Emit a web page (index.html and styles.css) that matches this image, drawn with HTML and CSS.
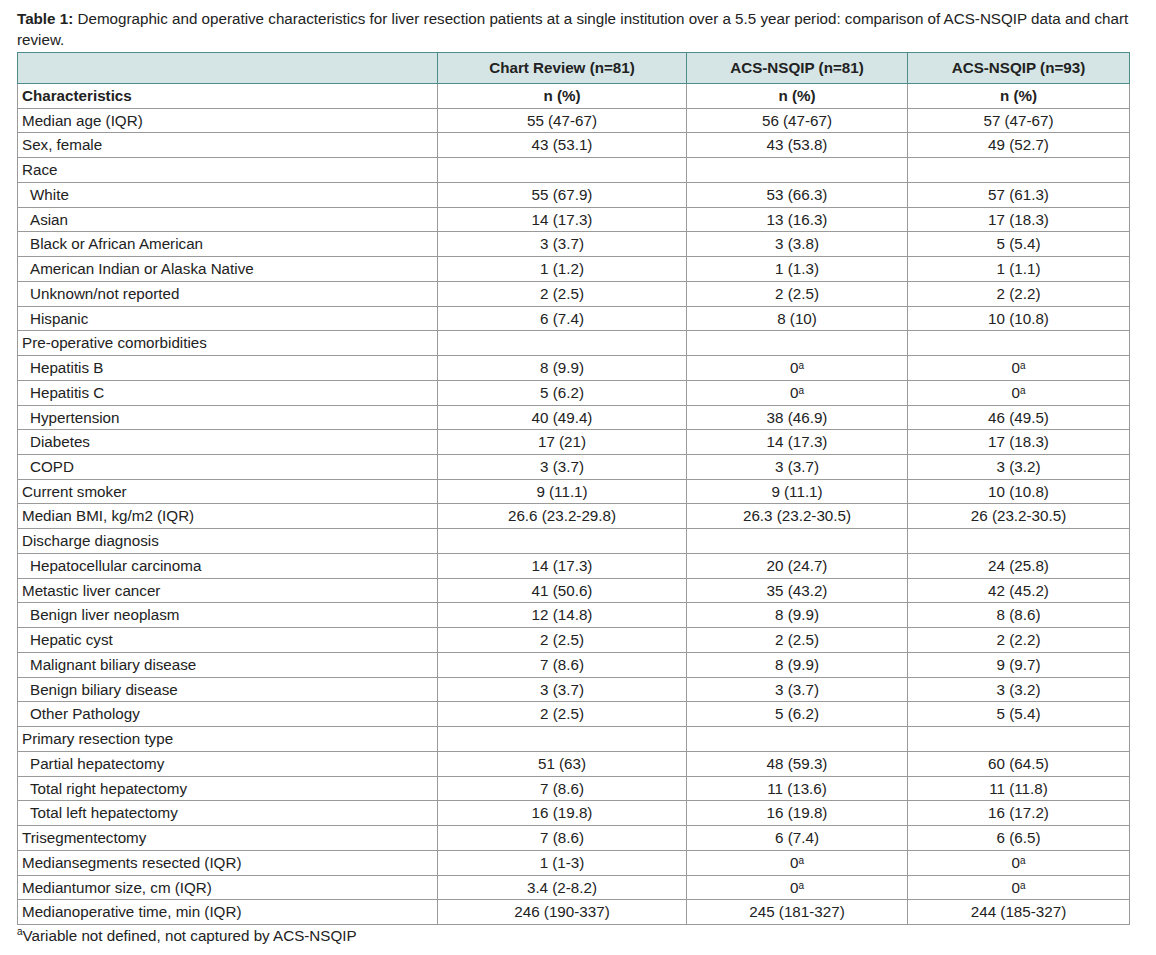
FILE: index.html
```html
<!DOCTYPE html>
<html>
<head>
<meta charset="utf-8">
<link rel="stylesheet" href="styles.css">
</head>
<body>
<div class="wrap">
<p class="caption"><b>Table 1:</b> Demographic and operative characteristics for liver resection patients at a single institution over a 5.5 year period: comparison of ACS-NSQIP data and chart review.</p>
<table class="data">
<colgroup><col class="c1"><col class="c2"><col class="c3"><col class="c4"></colgroup>
<thead>
<tr class="head"><th></th><th>Chart Review (n=81)</th><th>ACS-NSQIP (n=81)</th><th>ACS-NSQIP (n=93)</th></tr>
</thead>
<tbody>
<tr class="sub"><td>Characteristics</td><td>n (%)</td><td>n (%)</td><td>n (%)</td></tr>
<tr><td>Median age (IQR)</td><td>55 (47-67)</td><td>56 (47-67)</td><td>57 (47-67)</td></tr>
<tr><td>Sex, female</td><td>43 (53.1)</td><td>43 (53.8)</td><td>49 (52.7)</td></tr>
<tr><td>Race</td><td></td><td></td><td></td></tr>
<tr><td class="ind">White</td><td>55 (67.9)</td><td>53 (66.3)</td><td>57 (61.3)</td></tr>
<tr><td class="ind">Asian</td><td>14 (17.3)</td><td>13 (16.3)</td><td>17 (18.3)</td></tr>
<tr><td class="ind">Black or African American</td><td>3 (3.7)</td><td>3 (3.8)</td><td>5 (5.4)</td></tr>
<tr><td class="ind">American Indian or Alaska Native</td><td>1 (1.2)</td><td>1 (1.3)</td><td>1 (1.1)</td></tr>
<tr><td class="ind">Unknown/not reported</td><td>2 (2.5)</td><td>2 (2.5)</td><td>2 (2.2)</td></tr>
<tr><td class="ind">Hispanic</td><td>6 (7.4)</td><td>8 (10)</td><td>10 (10.8)</td></tr>
<tr><td>Pre-operative comorbidities</td><td></td><td></td><td></td></tr>
<tr><td class="ind">Hepatitis B</td><td>8 (9.9)</td><td>0<sup>a</sup></td><td>0<sup>a</sup></td></tr>
<tr><td class="ind">Hepatitis C</td><td>5 (6.2)</td><td>0<sup>a</sup></td><td>0<sup>a</sup></td></tr>
<tr><td class="ind">Hypertension</td><td>40 (49.4)</td><td>38 (46.9)</td><td>46 (49.5)</td></tr>
<tr><td class="ind">Diabetes</td><td>17 (21)</td><td>14 (17.3)</td><td>17 (18.3)</td></tr>
<tr><td class="ind">COPD</td><td>3 (3.7)</td><td>3 (3.7)</td><td>3 (3.2)</td></tr>
<tr><td>Current smoker</td><td>9 (11.1)</td><td>9 (11.1)</td><td>10 (10.8)</td></tr>
<tr><td>Median BMI, kg/m2 (IQR)</td><td>26.6 (23.2-29.8)</td><td>26.3 (23.2-30.5)</td><td>26 (23.2-30.5)</td></tr>
<tr><td>Discharge diagnosis</td><td></td><td></td><td></td></tr>
<tr><td class="ind">Hepatocellular carcinoma</td><td>14 (17.3)</td><td>20 (24.7)</td><td>24 (25.8)</td></tr>
<tr><td>Metastic liver cancer</td><td>41 (50.6)</td><td>35 (43.2)</td><td>42 (45.2)</td></tr>
<tr><td class="ind">Benign liver neoplasm</td><td>12 (14.8)</td><td>8 (9.9)</td><td>8 (8.6)</td></tr>
<tr><td class="ind">Hepatic cyst</td><td>2 (2.5)</td><td>2 (2.5)</td><td>2 (2.2)</td></tr>
<tr><td class="ind">Malignant biliary disease</td><td>7 (8.6)</td><td>8 (9.9)</td><td>9 (9.7)</td></tr>
<tr><td class="ind">Benign biliary disease</td><td>3 (3.7)</td><td>3 (3.7)</td><td>3 (3.2)</td></tr>
<tr><td class="ind">Other Pathology</td><td>2 (2.5)</td><td>5 (6.2)</td><td>5 (5.4)</td></tr>
<tr><td>Primary resection type</td><td></td><td></td><td></td></tr>
<tr><td class="ind">Partial hepatectomy</td><td>51 (63)</td><td>48 (59.3)</td><td>60 (64.5)</td></tr>
<tr><td class="ind">Total right hepatectomy</td><td>7 (8.6)</td><td>11 (13.6)</td><td>11 (11.8)</td></tr>
<tr><td class="ind">Total left hepatectomy</td><td>16 (19.8)</td><td>16 (19.8)</td><td>16 (17.2)</td></tr>
<tr><td>Trisegmentectomy</td><td>7 (8.6)</td><td>6 (7.4)</td><td>6 (6.5)</td></tr>
<tr><td>Mediansegments resected (IQR)</td><td>1 (1-3)</td><td>0<sup>a</sup></td><td>0<sup>a</sup></td></tr>
<tr><td>Mediantumor size, cm (IQR)</td><td>3.4 (2-8.2)</td><td>0<sup>a</sup></td><td>0<sup>a</sup></td></tr>
<tr><td>Medianoperative time, min (IQR)</td><td>246 (190-337)</td><td>245 (181-327)</td><td>244 (185-327)</td></tr>
</tbody>
</table>
<p class="note"><sup>a</sup>Variable not defined, not captured by ACS-NSQIP</p>
</div>
</body>
</html>
```

FILE: styles.css
```css
html, body {
  margin: 0;
  padding: 0;
  background: #ffffff;
}
body {
  font-family: "Liberation Sans", Arial, sans-serif;
  font-size: 15.2px;
  color: #222222;
}
.wrap {
  width: 1116px;
  padding: 8px 0 0 17px;
}
.caption {
  margin: 0 0 2px 0;
  line-height: 21px;
}
.data {
  width: 1113px;
  border-collapse: collapse;
  table-layout: fixed;
}
.c1 { width: 420px; }
.c2 { width: 249px; }
.c3 { width: 221px; }
.c4 { width: 222px; }
.data th, .data td {
  border: 1px solid #9a9a9a;
  padding: 3px 4px 3px 4px;
  line-height: 17.73px;
  text-align: center;
  font-weight: normal;
}
.data td:first-child {
  text-align: left;
}
.data td.ind {
  padding-left: 12px;
}
.head th {
  background: #d5e5e5;
  border: 1px solid #4e8c8a;
  font-weight: bold;
  height: 24px;
  padding-top: 3px;
  padding-bottom: 3px;
}
.sub td {
  font-weight: bold;
}
sup {
  font-size: 10px;
  vertical-align: top;
  line-height: 12px;
  position: relative;
  top: 1px;
}
.note {
  margin: 0;
  line-height: 22px;
}
```
